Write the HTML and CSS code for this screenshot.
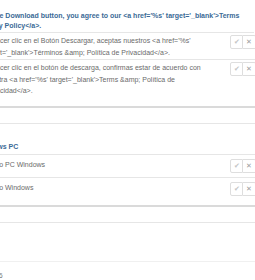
FILE: index.html
```html
<!DOCTYPE html>
<html>
<head>
  <meta charset="UTF-8">
  <meta name="viewport" content="width=device-width, initial-scale=1.0">
  <link rel="stylesheet" href="styles.css">
</head>
<body>
<div class="page">
  <div class="panel first">
    <div class="panel-head wide">By clicking the Download button, you agree to our &lt;a href='%s' target='_blank'&gt;Terms &amp;amp; Privacy Policy&lt;/a&gt;.</div>
    <div class="row">
      <div class="text">Al hacer clic en el Botón Descargar, aceptas nuestros &lt;a href='%s' target='_blank'&gt;Términos &amp;amp; Política de Privacidad&lt;/a&gt;.</div>
      <div class="btns"><span class="btn ok">&#10004;</span><span class="btn no">&#10005;</span></div>
    </div>
    <div class="row">
      <div class="text">Al hacer clic en el botón de descarga, confirmas estar de acuerdo con nuestra &lt;a href='%s' target='_blank'&gt;Terms &amp;amp; Política de Privacidad&lt;/a&gt;.</div>
      <div class="btns"><span class="btn ok">&#10004;</span><span class="btn no">&#10005;</span></div>
    </div>
  </div>

  <div class="panel second">
    <div class="panel-head tall">Windows PC</div>
    <div class="row single">
      <div class="text">Juego PC Windows</div>
      <div class="btns"><span class="btn ok">&#10004;</span><span class="btn no">&#10005;</span></div>
    </div>
    <div class="row single">
      <div class="text">Juego Windows</div>
      <div class="btns"><span class="btn ok">&#10004;</span><span class="btn no">&#10005;</span></div>
    </div>
  </div>

  <div class="panel empty">
    <div class="panel-head blank"></div>
  </div>

  <div class="footer">© 2016</div>
</div>
</body>
</html>
```

FILE: styles.css
```css
body {
  margin: 0;
  overflow: hidden;
  background: #fff;
  font-family: "Liberation Sans", Arial, sans-serif;
  font-size: 7px;
  color: #6a6a6a;
}

.page {
  margin-left: -46px;
  width: 330px;
}

.panel {
  border-top: 1px solid #e6e6e6;
  border-bottom: 2px solid #dadada;
  margin-bottom: 15px;
}

.panel.first {
  border-top: none;
  padding-bottom: 8px;
}

.panel.second {
  padding-bottom: 5px;
}

.panel.empty {
  border-bottom: none;
  margin-bottom: 0;
}

.panel-head {
  color: #3b6a96;
  font-size: 7px;
  font-weight: bold;
  line-height: 10px;
  border-bottom: 1px solid #e6e6e6;
}

.panel-head.wide {
  width: 300px;
  padding: 11px 0 1px 0;
}

.panel-head.tall {
  padding: 18px 0 2px 22px;
}

.panel-head.blank {
  height: 38px;
  border-bottom: 1px solid #f0f0f0;
}

.row {
  display: flex;
  align-items: flex-start;
  border-bottom: 1px solid #e6e6e6;
  padding: 2px 0 1px 0;
}

.row.single {
  padding: 4px 0;
}

.row:last-child {
  border-bottom: none;
}

.text {
  width: 228px;
  padding-left: 30px;
  line-height: 11.5px;
}

.btns {
  display: flex;
  margin-left: 18px;
}

.btn {
  width: 13px;
  height: 14px;
  box-sizing: border-box;
  border: 1px solid #dedede;
  display: flex;
  align-items: center;
  justify-content: center;
  font-size: 7px;
}

.btn.ok {
  color: #c4c4c4;
  border-radius: 2px 0 0 2px;
}

.btn.no {
  color: #9c9c9c;
  border-left: none;
  border-radius: 0 2px 2px 0;
}

.footer {
  margin-top: 8px;
  padding-left: 26px;
  line-height: 12px;
  color: #777;
}
```
